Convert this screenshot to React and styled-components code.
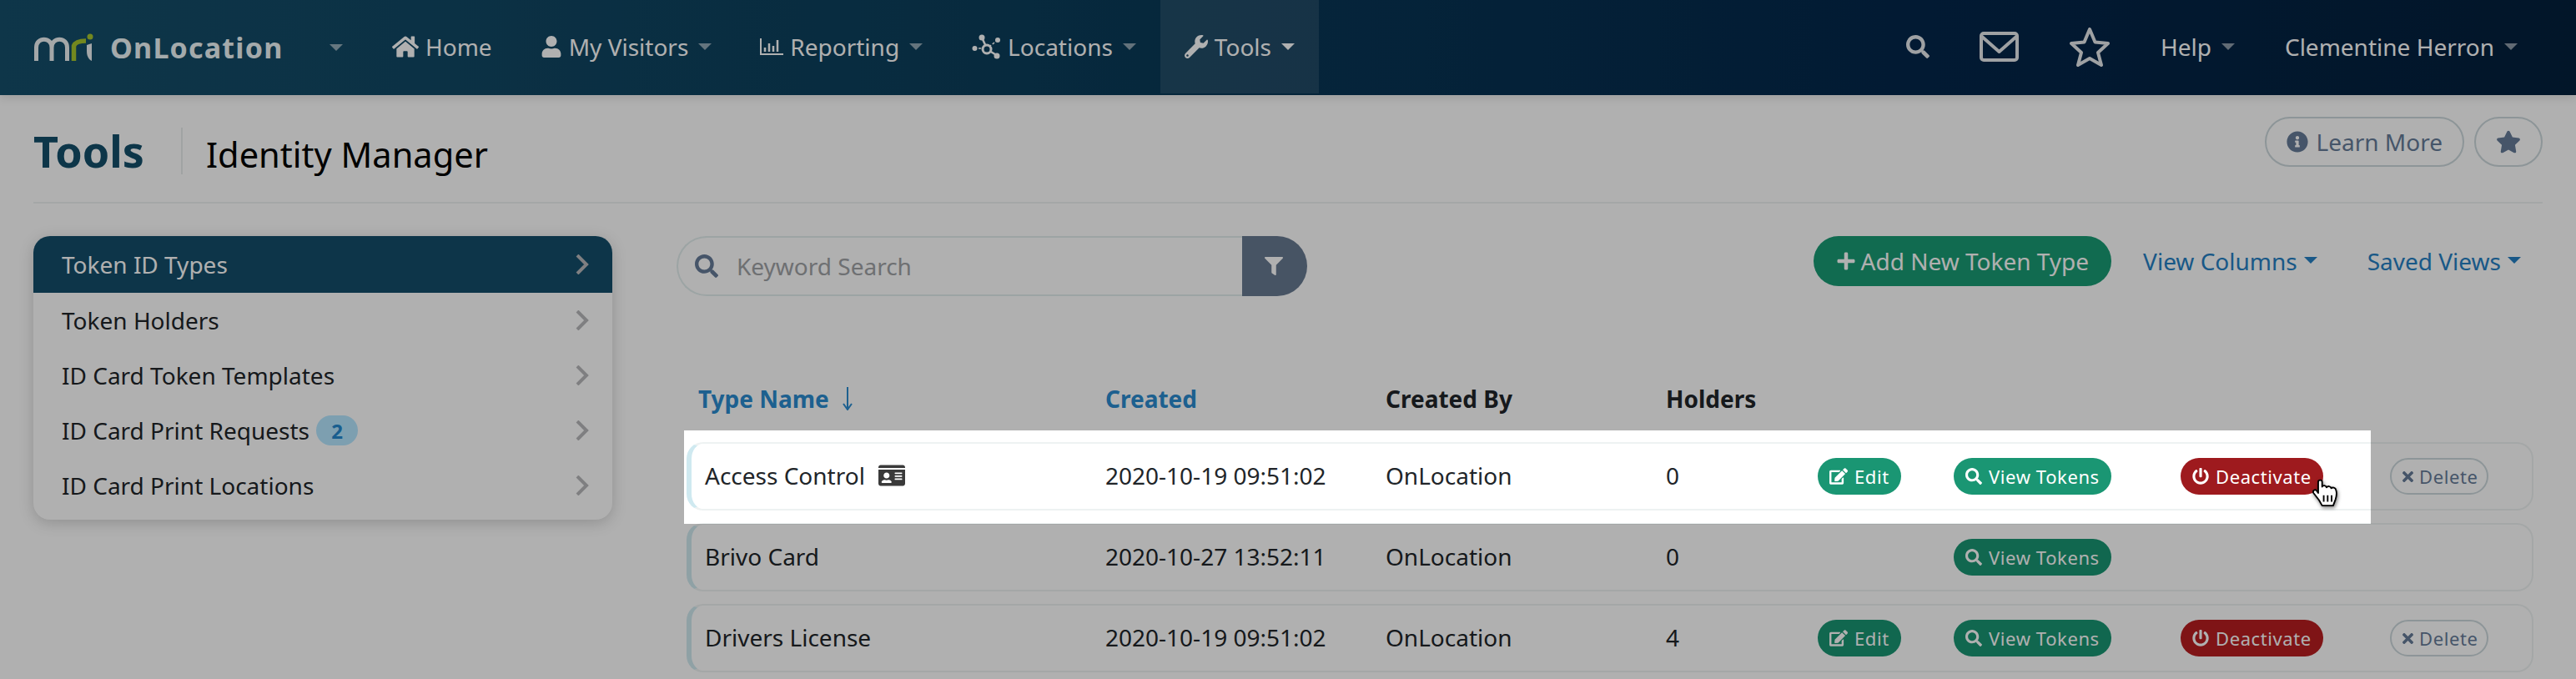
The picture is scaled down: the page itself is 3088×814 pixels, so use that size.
import React from 'react'
import styled, { createGlobalStyle } from 'styled-components'
import {
  FaHome, FaUser, FaWrench, FaSearch, FaInfoCircle, FaStar, FaFilter, FaPlus,
  FaEdit, FaPowerOff, FaTimes, FaIdCard,
} from 'react-icons/fa'

const Global = createGlobalStyle`
  html, body { margin: 0; padding: 0; background: #fff; }
  body { font-family: 'Noto Sans', 'Open Sans', sans-serif; color: #212529; }
  * { box-sizing: border-box; }
`

const Page = styled.div`
  position: relative;
  width: 3088px;
  height: 814px;
  overflow: hidden;
  background: #fff;
`

const Spotlight = styled.div`
  position: absolute;
  left: 820px;
  top: 516px;
  width: 2022px;
  height: 112px;
  box-shadow: 0 0 0 4000px rgba(0, 0, 0, 0.31);
  pointer-events: none;
  z-index: 10;
`

const Navbar = styled.nav`
  display: flex;
  align-items: flex-start;
  height: 114px;
  padding-left: 40px;
  padding-right: 70px;
  color: #fff;
  background: linear-gradient(90deg, #154f6b 0%, #0b3d5a 40%, #03264a 75%, #03203c 100%);
  box-shadow: 0 4px 10px rgba(0, 0, 0, 0.1);
`

const Brand = styled.div`
  display: flex;
  align-items: center;
  width: 401px;
  height: 114px;
`

const BrandName = styled.span`
  margin-left: 20px;
  font-size: 34px;
  font-weight: 700;
  letter-spacing: 1.2px;
  color: #eef6f8;
`

const Caret = styled.i`
  display: inline-block;
  width: 0;
  height: 0;
  border-left: ${p => p.$size || 8}px solid transparent;
  border-right: ${p => p.$size || 8}px solid transparent;
  border-top: ${p => p.$size || 8}px solid ${p => p.$color || 'rgba(255,255,255,0.55)'};
`

const BrandCaret = styled(Caret)`
  margin-left: 56px;
`

const NavItem = styled.div`
  display: flex;
  align-items: center;
  gap: 8px;
  height: 112px;
  padding: 0 29px;
  font-size: 28px;
  white-space: nowrap;
  background: ${p => (p.$active ? 'rgba(255,255,255,0.1)' : 'transparent')};

  svg { flex: none; }
  ${Caret} {
    margin-left: 4px;
    border-top-color: ${p => (p.$active ? '#fff' : 'rgba(255,255,255,0.55)')};
  }
`

const NavRight = styled.div`
  display: flex;
  align-items: center;
  gap: 60px;
  height: 112px;
  margin-left: auto;
  font-size: 28px;

  > svg { opacity: 0.9; }
`

const NavText = styled.span`
  display: flex;
  align-items: center;
  gap: 12px;
  white-space: nowrap;
`

const Header = styled.header`
  display: flex;
  align-items: flex-start;
  height: 130px;
  margin: 0 40px;
  border-bottom: 2px solid #eef2f2;
`

const Section = styled.h1`
  margin: 39px 0 0;
  padding-right: 44px;
  font-size: 52px;
  line-height: 56px;
  font-weight: 700;
  color: #144f6b;
  border-right: 2px solid #e8ecec;
`

const SubSection = styled.h2`
  margin: 43px 0 0 28px;
  font-size: 41.600px;
  line-height: 56px;
  font-weight: 400;
  color: #000;
`

const HeaderActions = styled.div`
  display: flex;
  gap: 12px;
  margin: 26px 0 0 auto;
`

const OutlineButton = styled.button`
  display: flex;
  align-items: center;
  justify-content: center;
  gap: 10px;
  height: 60px;
  padding: 0 24px;
  font: inherit;
  font-size: 28px;
  color: #667c99;
  background: #fff;
  border: 2px solid #ccd8dc;
  border-radius: 30px;
`

const Body = styled.div`
  display: flex;
  align-items: flex-start;
  padding: 39px 40px 0;
`

const SideMenu = styled.ul`
  flex: none;
  width: 694px;
  height: 340px;
  margin: 0;
  padding: 0;
  list-style: none;
  background: #fff;
  border-radius: 20px;
  overflow: hidden;
  box-shadow: 0 4px 18px rgba(0, 0, 0, 0.18);
`

const SideItem = styled.li`
  display: flex;
  align-items: center;
  height: ${p => (p.$active ? 68 : 66)}px;
  padding: 0 28px 0 34px;
  font-size: 28px;
  color: ${p => (p.$active ? '#fff' : '#212529')};
  background: ${p => (p.$active ? '#134e6b' : 'transparent')};

  svg { margin-left: auto; }
`

const Badge = styled.span`
  display: flex;
  align-items: center;
  justify-content: center;
  width: 50px;
  height: 36px;
  margin-left: 8px;
  font-size: 24px;
  font-weight: 700;
  color: #2489d0;
  background: #b5e6ff;
  border-radius: 18px;
`

const Content = styled.main`
  flex: 1;
  margin-left: 77px;
  min-width: 0;
`

const Toolbar = styled.div`
  display: flex;
  align-items: flex-start;
  height: 165px;
`

const SearchBox = styled.div`
  display: flex;
  width: 756px;
  height: 72px;
`

const SearchField = styled.div`
  display: flex;
  align-items: center;
  gap: 22px;
  flex: 1;
  padding-left: 20px;
  font-size: 28px;
  color: #a0a2a6;
  border: 2px solid #e2eeee;
  border-right: none;
  border-radius: 36px 0 0 36px;

  svg { color: #667c99; }
`

const FilterButton = styled.div`
  display: flex;
  align-items: center;
  justify-content: center;
  width: 78px;
  padding-right: 2px;
  color: #fff;
  background: #687a91;
  border-radius: 0 36px 36px 0;
`

const ToolbarActions = styled.div`
  display: flex;
  align-items: center;
  height: 60px;
  margin-left: auto;
  padding-right: 26px;
`

const AddButton = styled.button`
  display: flex;
  align-items: center;
  gap: 6px;
  height: 60px;
  padding: 0 27px;
  font: inherit;
  font-size: 28px;
  color: #fff;
  background: #1a9b74;
  border: none;
  border-radius: 30px;
`

const LinkDrop = styled.span`
  display: flex;
  align-items: center;
  gap: 8px;
  margin-left: ${p => p.$gap}px;
  font-size: 28px;
  color: #2580c4;
  white-space: nowrap;

  ${Caret} { margin-bottom: 2px; }
`

const Columns = styled.div`
  display: grid;
  grid-template-columns: ${p => p.$first}px 336px 336px 182px 163px 272px 251px 172px;
  align-items: center;
`

const HeadRow = styled(Columns)`
  width: 2214px;
  height: 60px;
  margin: 0 0 22px 12px;
  padding-left: 14px;
  font-size: 28px;
  font-weight: 700;
`

const HeadCell = styled.span`
  display: flex;
  align-items: center;
  gap: 16px;
  color: ${p => (p.$link ? '#2a8bd0' : '#212529')};
`

const Rows = styled.div`
  display: flex;
  flex-direction: column;
  gap: 15px;
  width: 2214px;
  margin-left: 12px;
`

const Row = styled(Columns)`
  height: 82px;
  padding-left: 16px;
  font-size: 28px;
  border: 2px solid #eef2f2;
  border-left: 6px solid #cfe9f0;
  border-radius: 20px;
`

const Cell = styled.span`
  padding-bottom: 2px;
`

const NameCell = styled(Cell)`
  display: flex;
  align-items: center;
  gap: 16px;

  svg { color: #3a3a3a; }
`

const PillButton = styled.span`
  position: relative;
  display: inline-flex;
  align-items: center;
  justify-content: center;
  gap: ${p => (p.$tone === 'delete' ? 4 : 8)}px;
  justify-self: start;
  height: 44px;
  padding: 0 ${p => (p.$tone === 'delete' ? 10 : 14)}px;
  font-size: 22px;
  letter-spacing: 0.6px;
  white-space: nowrap;
  border-radius: 22px;
  color: ${p => (p.$tone === 'delete' ? '#667c99' : '#fff')};
  background: ${p => ({ green: '#1a9673', red: '#b81e20', hover: '#9e1a1e', delete: '#fff' }[p.$tone])};
  border: ${p => (p.$tone === 'delete' ? '2px solid #ccd8dc' : 'none')};
`

const ActionCell = styled.span`
  display: flex;
  align-items: center;
  height: 44px;
`

const Cursor = styled.svg`
  position: absolute;
  left: 157px;
  top: 25px;
  z-index: 20;
  filter: drop-shadow(1px 2px 2px rgba(0, 0, 0, 0.5));
`

const BrandLogo = () => (
  <svg width="72" height="34" viewBox="0 0 72 34" fill="none">
    <path d="M3.500 33V17C3.500 4 22 4 22 17V33M22 17C22 4 40.500 4 40.500 17V33" stroke="#eef2f4" strokeWidth="5" />
    <path d="M48.500 33V15C50 11 56 9 63 9" stroke="#a7c52e" strokeWidth="5.500" />
    <path d="M64 14L70 12V33C66 31 64 27 64 21Z" fill="#eef2f4" />
    <circle cx="68" cy="4" r="3.500" fill="#a7c52e" />
  </svg>
)

const ReportIcon = () => (
  <svg width="28" height="20" viewBox="0 0 28 20" fill="none" stroke="#fff">
    <path d="M1 0v19h27" strokeWidth="2" />
    <path d="M6 16v-5M11 16V6M16 16v-7M21 16V2" strokeWidth="2.500" />
  </svg>
)

const LocationsIcon = () => (
  <svg width="36" height="30" viewBox="0 0 34 30" fill="#fff" stroke="#fff">
    <path d="M12 4l6 13M18 18l13 8" fill="none" strokeWidth="2.500" />
    <path d="M3 17h10M31 7l-9 7" fill="none" strokeWidth="1.500" strokeDasharray="3 2" />
    <circle cx="12" cy="4" r="3.500" stroke="none" />
    <circle cx="31" cy="7" r="3" stroke="none" />
    <circle cx="3.500" cy="17" r="3" stroke="none" />
    <circle cx="30" cy="26" r="3.500" stroke="none" />
    <circle cx="18" cy="18" r="5" fill="#0b3d5a" strokeWidth="3" />
  </svg>
)

const MailIcon = () => (
  <svg width="47" height="36" viewBox="0 0 47 36" fill="none" stroke="#fff" strokeWidth="4" strokeLinejoin="round">
    <rect x="2" y="2" width="43" height="32" rx="3" />
    <path d="M3 6l20.500 18L44 6" />
  </svg>
)

const StarOutline = () => (
  <svg width="50" height="48" viewBox="0 0 50 48" fill="none" stroke="#fff" strokeWidth="4" strokeLinejoin="round">
    <path d="M25 3l6.500 15.500L47 20 35 31l4 15-14-8-14 8 4-15L3 20l15.500-1.500z" />
  </svg>
)

const Chevron = () => (
  <svg width="16" height="24" viewBox="0 0 16 24" fill="none" stroke="#b8b9bb" strokeWidth="4">
    <path d="M2 1l11 11L2 23" />
  </svg>
)

const SortArrow = () => (
  <svg width="12" height="28" viewBox="0 0 12 28" fill="none" stroke="currentColor" strokeWidth="2">
    <path d="M6 0v26M1 20l5 7 5-7" />
  </svg>
)

const HandCursor = () => (
  <Cursor width="32" height="34" viewBox="-1 -1 33 36">
    <path
      d="M7 3C7 0 12 0 12 3V9C13 7 17 7 17.500 10C19 8 23 8 23.500 11C25 9.500 29 10 29.500 13C30.500 16 30 22 29 25L26 33H12L8 26L1 17C-.5 14 3 12 5 14L7 17Z"
      fill="#fff"
      stroke="#000"
      strokeWidth="2"
      strokeLinejoin="round"
    />
    <path d="M14 20v8M19 20v8M24 20v8" stroke="#000" strokeWidth="2" />
  </Cursor>
)

const rows = [
  { name: 'Access Control', card: true, created: '2020-10-19 09:51:02', holders: '0', edit: true, off: true, hover: true },
  { name: 'Brivo Card', created: '2020-10-27 13:52:11', holders: '0' },
  { name: 'Drivers License', created: '2020-10-19 09:51:02', holders: '4', edit: true, off: true },
]

const menu = ['Token ID Types', 'Token Holders', 'ID Card Token Templates', 'ID Card Print Requests', 'ID Card Print Locations']

const App = () => (
  <Page>
    <Global />
    <Spotlight />
    <Navbar>
      <Brand>
        <BrandLogo />
        <BrandName>OnLocation</BrandName>
        <BrandCaret />
      </Brand>
      <NavItem><FaHome size={32} />Home</NavItem>
      <NavItem><FaUser size={26} />My Visitors<Caret /></NavItem>
      <NavItem><ReportIcon />Reporting<Caret /></NavItem>
      <NavItem><LocationsIcon />Locations<Caret /></NavItem>
      <NavItem $active><FaWrench size={28} />Tools<Caret /></NavItem>
      <NavRight>
        <FaSearch size={28} />
        <MailIcon />
        <StarOutline />
        <NavText>Help<Caret /></NavText>
        <NavText>Clementine Herron<Caret /></NavText>
      </NavRight>
    </Navbar>

    <Header>
      <Section>Tools</Section>
      <SubSection>Identity Manager</SubSection>
      <HeaderActions>
        <OutlineButton><FaInfoCircle size={26} />Learn More</OutlineButton>
        <OutlineButton><FaStar size={30} /></OutlineButton>
      </HeaderActions>
    </Header>

    <Body>
      <SideMenu>
        {menu.map((label, i) => (
          <SideItem key={label} $active={i === 0}>
            {label}
            {i === 3 && <Badge>2</Badge>}
            <Chevron />
          </SideItem>
        ))}
      </SideMenu>

      <Content>
        <Toolbar>
          <SearchBox>
            <SearchField><FaSearch size={28} />Keyword Search</SearchField>
            <FilterButton><FaFilter size={22} /></FilterButton>
          </SearchBox>
          <ToolbarActions>
            <AddButton><FaPlus size={24} />Add New Token Type</AddButton>
            <LinkDrop $gap={38}>View Columns<Caret $size={8} $color="#2580c4" /></LinkDrop>
            <LinkDrop $gap={60}>Saved Views<Caret $size={8} $color="#2580c4" /></LinkDrop>
          </ToolbarActions>
        </Toolbar>

        <HeadRow $first={488}>
          <HeadCell $link>Type Name<SortArrow /></HeadCell>
          <HeadCell $link>Created</HeadCell>
          <HeadCell>Created By</HeadCell>
          <HeadCell>Holders</HeadCell>
        </HeadRow>

        <Rows>
          {rows.map(r => (
            <Row key={r.name} $first={480}>
              <NameCell>{r.name}{r.card && <FaIdCard size={32} />}</NameCell>
              <Cell>{r.created}</Cell>
              <Cell>OnLocation</Cell>
              <Cell>{r.holders}</Cell>
              <ActionCell>{r.edit && <PillButton $tone="green"><FaEdit size={22} />Edit</PillButton>}</ActionCell>
              <ActionCell><PillButton $tone="green"><FaSearch size={20} />View Tokens</PillButton></ActionCell>
              <ActionCell>
                {r.off && (
                  <PillButton $tone={r.hover ? 'hover' : 'red'}>
                    <FaPowerOff size={20} />Deactivate
                    {r.hover && <HandCursor />}
                  </PillButton>
                )}
              </ActionCell>
              <ActionCell>{r.off && <PillButton $tone="delete"><FaTimes size={19} />Delete</PillButton>}</ActionCell>
            </Row>
          ))}
        </Rows>
      </Content>
    </Body>
  </Page>
)

export default App
